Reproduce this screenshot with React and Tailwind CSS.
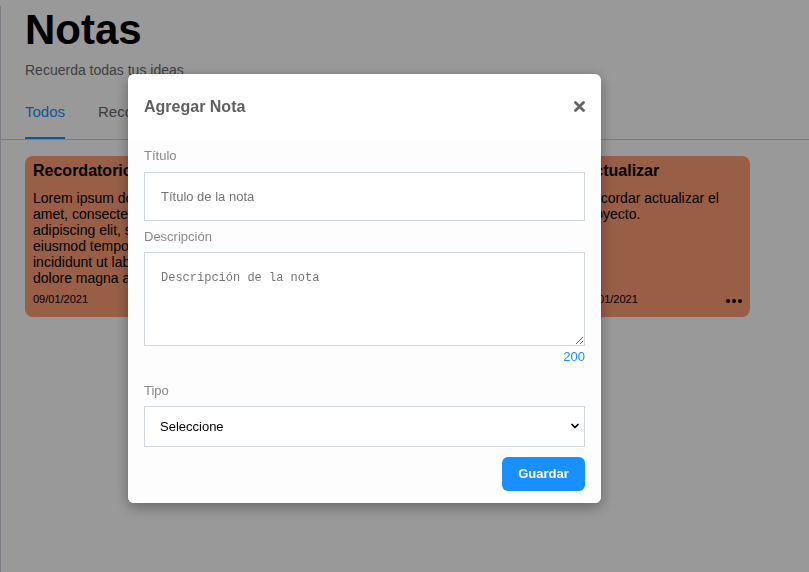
import { ChevronDown } from "lucide-react";

const notes = [
  {
    title: "Recordatorio",
    body: "Lorem ipsum dolor sit amet, consectetur adipiscing elit, sed do eiusmod tempor incididunt ut labore et dolore magna aliqua.",
    date: "09/01/2021",
  },
  {
    title: "Tarea",
    body: "Terminar el informe semanal y enviarlo al equipo.",
    date: "09/01/2021",
  },
  {
    title: "Idea",
    body: "Agregar filtros por tipo de nota.",
    date: "09/01/2021",
  },
  {
    title: "Actualizar",
    body: "Recordar actualizar el proyecto.",
    date: "09/01/2021",
  },
];

const NoteCard = ({ note }) => (
  <div className="flex h-[161px] flex-col rounded-lg bg-[#ff9d75] px-2 pt-[6px] pb-[11px]">
    <h3 className="text-[16px] font-bold leading-[18px] text-black">{note.title}</h3>
    <p className="mt-[10px] text-[14px] leading-[16px] text-black">{note.body}</p>
    <div className="mt-auto flex items-center justify-between">
      <span className="text-[11px] leading-[13px] text-black">{note.date}</span>
      <div className="mt-[3px] flex gap-[2px]">
        <span className="h-[4px] w-[4px] rounded-full bg-black" />
        <span className="h-[4px] w-[4px] rounded-full bg-black" />
        <span className="h-[4px] w-[4px] rounded-full bg-black" />
      </div>
    </div>
  </div>
);

const AddNoteModal = () => (
  <div className="fixed inset-0 bg-black/40">
    <div className="absolute left-[128px] top-[74px] w-[473px] rounded-md bg-white shadow-[0_4px_14px_rgba(0,0,0,0.35)]">
      {/* Header */}
      <div className="flex h-[65px] items-center justify-between px-4">
        <h2 className="text-[16px] font-bold text-[#5f5f5f]">Agregar Nota</h2>
        <button className="text-[#666]">
          <svg width="11" height="11" viewBox="0 0 11 11">
            <path d="M1.5 1.5L9.5 9.5M9.5 1.5L1.5 9.5" stroke="currentColor" strokeWidth="2.8" strokeLinecap="round" />
          </svg>
        </button>
      </div>

      {/* Body */}
      <div className="flex flex-col rounded-b-md bg-[#fdfdfd] px-4 pt-[9px] pb-[12px]">
        <label className="block text-[13px] leading-[15px] text-[#8a8a8a]">Título</label>
        <input
          type="text"
          placeholder="Título de la nota"
          className="mt-[9px] h-[49px] w-full border border-[#cfd6dc] bg-white px-4 text-[13px] outline-none placeholder:text-[#757575]"
        />

        <label className="mt-[8px] block text-[13px] leading-[15px] text-[#8a8a8a]">Descripción</label>
        <textarea
          placeholder="Descripción de la nota"
          className="mt-[8px] h-[94px] w-full border border-[#cfd6dc] bg-white px-4 pt-[18px] font-['Liberation_Mono',monospace] text-[12px] leading-[14px] outline-none placeholder:text-[#757575]"
        />
        <span className="mt-[3px] text-right text-[13px] leading-[15px] text-[#1890ff]">200</span>

        <label className="mt-[19px] block text-[13px] leading-[15px] text-[#8a8a8a]">Tipo</label>
        <div className="relative mt-[8px]">
          <select className="h-[41px] w-full appearance-none border border-[#cfd6dc] bg-white pl-[15px] text-[13px] text-black outline-none">
            <option>Seleccione</option>
            <option>Recordatorio</option>
            <option>Tarea</option>
          </select>
          <ChevronDown
            size={12}
            strokeWidth={3.5}
            className="pointer-events-none absolute right-[4px] top-[14px] text-black"
          />
        </div>

        <button className="mt-[10px] ml-auto h-[34px] w-[83px] rounded-md bg-[#1890ff] text-[13px] font-bold text-white">
          Guardar
        </button>
      </div>
    </div>
  </div>
);

export default function App() {
  return (
    <div className="min-h-screen border-l border-[#d0d7de] bg-white font-['Liberation_Sans',Arial,sans-serif]">
      <div className="px-[24px]">
        <h1 className="mt-[6px] text-[42px] font-bold leading-[48px] text-black">Notas</h1>
        <p className="mt-[8px] text-[14px] leading-[16px] text-[#6b6b6b]">Recuerda todas tus ideas</p>
      </div>

      {/* Tabs */}
      <div className="mt-[25px] flex gap-[33px] border-b border-[#cfcfcf] px-[24px]">
        <button className="border-b-2 border-[#1890ff] pb-[17px] text-[15px] leading-[17px] text-[#1890ff]">
          Todos
        </button>
        <button className="border-b-2 border-transparent pb-[17px] text-[15px] leading-[17px] text-[#666]">
          Recordatorios
        </button>
        <button className="border-b-2 border-transparent pb-[17px] text-[15px] leading-[17px] text-[#666]">
          Tareas
        </button>
      </div>

      {/* Notes */}
      <div className="ml-[24px] mt-4 grid w-[725px] grid-cols-4 gap-2">
        {notes.map((note, i) => (
          <NoteCard key={i} note={note} />
        ))}
      </div>

      <AddNoteModal />
    </div>
  );
}
